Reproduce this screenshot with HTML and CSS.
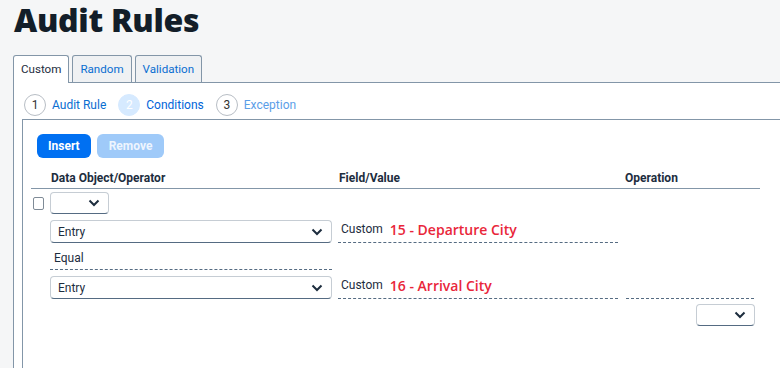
FILE: index.html
```html
<!DOCTYPE html>
<html lang="en">
<head>
    <meta charset="UTF-8">
    <meta name="viewport" content="width=device-width, initial-scale=1.0">
    <title>Audit Rules</title>
    <link rel="stylesheet" href="styles.css">
</head>
<body>
    <h1 class="page-title">Audit Rules</h1>

    <div class="tabs">
        <div class="tab active">Custom</div>
        <div class="tab">Random</div>
        <div class="tab">Validation</div>
    </div>

    <div class="panel">
        <div class="steps">
            <div class="step"><span class="step-num">1</span><span class="step-label">Audit Rule</span></div>
            <div class="step current"><span class="step-num">2</span><span class="step-label">Conditions</span></div>
            <div class="step next"><span class="step-num">3</span><span class="step-label">Exception</span></div>
        </div>

        <div class="conditions">
            <div class="toolbar">
                <button class="btn">Insert</button>
                <button class="btn disabled">Remove</button>
            </div>

            <div class="grid">
                <div class="head"></div>
                <div class="head">Data Object/Operator</div>
                <div class="head">Field/Value</div>
                <div class="head">Operation</div>

                <div class="cell"><span class="checkbox"></span></div>
                <div class="cell">
                    <div class="select small">
                        <span></span>
                        <svg width="12" height="8" viewBox="0 0 12 8"><path d="M1.5 1.5 L6 6 L10.5 1.5" fill="none" stroke="#1d2d3e" stroke-width="2"/></svg>
                    </div>
                </div>
                <div class="cell"></div>
                <div class="cell"></div>

                <div class="cell"></div>
                <div class="cell">
                    <div class="select">
                        <span>Entry</span>
                        <svg width="12" height="8" viewBox="0 0 12 8"><path d="M1.5 1.5 L6 6 L10.5 1.5" fill="none" stroke="#1d2d3e" stroke-width="2"/></svg>
                    </div>
                </div>
                <div class="cell"><div class="value"><span class="kind">Custom</span><span class="field">15 - Departure City</span></div></div>
                <div class="cell"></div>

                <div class="cell"></div>
                <div class="cell"><div class="operator">Equal</div></div>
                <div class="cell"></div>
                <div class="cell"></div>

                <div class="cell"></div>
                <div class="cell">
                    <div class="select">
                        <span>Entry</span>
                        <svg width="12" height="8" viewBox="0 0 12 8"><path d="M1.5 1.5 L6 6 L10.5 1.5" fill="none" stroke="#1d2d3e" stroke-width="2"/></svg>
                    </div>
                </div>
                <div class="cell"><div class="value"><span class="kind">Custom</span><span class="field">16 - Arrival City</span></div></div>
                <div class="cell"><div class="value op-empty"></div></div>

                <div class="cell"></div>
                <div class="cell"></div>
                <div class="cell"></div>
                <div class="cell right">
                    <div class="select small">
                        <span></span>
                        <svg width="12" height="8" viewBox="0 0 12 8"><path d="M1.5 1.5 L6 6 L10.5 1.5" fill="none" stroke="#1d2d3e" stroke-width="2"/></svg>
                    </div>
                </div>
            </div>
        </div>
    </div>
</body>
</html>
```

FILE: styles.css
```css
body {
    margin: 0;
    background-color: #f5f6f7;
    font-family: Roboto, "Liberation Sans", sans-serif;
    color: #1d2d3e;
    overflow: hidden;
}
.page-title {
    margin: 0;
    padding: 0 0 0 14px;
    height: 55px;
    box-sizing: border-box;
    font-family: "Open Sans", sans-serif;
    font-weight: 800;
    font-size: 32px;
    letter-spacing: -0.3px;
    line-height: 40px;
    color: #131e29;
}
.tabs {
    display: flex;
    gap: 3px;
    padding-left: 13px;
}
.tab {
    height: 26px;
    padding: 0 7px;
    border: 1px solid #8396a8;
    border-bottom: none;
    border-radius: 3px 3px 0 0;
    background-color: #eff1f3;
    color: #0a6ed1;
    font-size: 11.6px;
    line-height: 27px;
}
.tab.active {
    background-color: #fff;
    color: #1d2d3e;
    position: relative;
    z-index: 1;
    height: 27px;
    margin-bottom: -1px;
}
.panel {
    margin-left: 13px;
    border-top: 1px solid #8396a8;
    border-left: 1px solid #8396a8;
    background-color: #fff;
    height: 300px;
}
.steps {
    display: flex;
    gap: 12px;
    padding: 11px 0 0 10px;
    height: 25px;
}
.step {
    display: flex;
    align-items: center;
    gap: 6px;
    height: 22px;
}
.step-num {
    width: 20px;
    height: 20px;
    border: 1px solid #b8bec5;
    border-radius: 50%;
    font-size: 12px;
    line-height: 20px;
    text-align: center;
    color: #333;
}
.step-label {
    font-size: 12px;
    color: #0a6ed1;
}
.step.current .step-num {
    background-color: #d6eaff;
    border-color: #d6eaff;
    color: #fff;
}
.step.current .step-label {
    color: #0064d9;
}
.step.next .step-label {
    color: #5b9ee8;
}
.conditions {
    margin-left: 8px;
    border-top: 1px solid #8396a8;
    border-left: 1px solid #8396a8;
    height: 260px;
    padding: 14px 0 0 14px;
}
.toolbar {
    display: flex;
    gap: 6px;
    margin-bottom: 13px;
}
.btn {
    height: 24px;
    padding: 0 11px;
    border: none;
    border-radius: 6px;
    background-color: #0070f2;
    color: #fff;
    font-family: Roboto, sans-serif;
    font-weight: 700;
    font-size: 12px;
}
.btn.disabled {
    background-color: #9fcaf9;
    color: #eef5fe;
    padding: 0 12px;
}
.grid {
    display: grid;
    grid-template-columns: 13px 282px 280px 130px;
    grid-template-rows: 18px 27px 28px 28px 28px 28px;
    column-gap: 6px;
    margin-left: -6px;
    width: 723px;
}
.head {
    font-size: 12px;
    font-weight: 700;
    line-height: 14px;
    padding-left: 1px;
    border-bottom: 1px solid #8396a8;
    margin-right: -6px;
}
.head:last-child {
    margin-right: -4px;
}
.cell {
    display: flex;
    align-items: flex-start;
    padding-top: 4px;
    font-size: 12px;
}
.cell.right {
    justify-content: flex-end;
    margin-right: -1px;
}
.checkbox {
    width: 11px;
    height: 11px;
    border: 1px solid #7f8b97;
    border-radius: 2px;
    margin: 5px 0 0 2px;
}
.grid > .cell:nth-child(-n+8) {
    padding-top: 3px;
}
.select {
    box-sizing: border-box;
    width: 100%;
    height: 23px;
    display: flex;
    align-items: center;
    justify-content: space-between;
    padding: 0 8px 0 7px;
    border: 1px solid #c6cdd4;
    border-bottom-color: #556b82;
    border-radius: 4px;
    font-size: 12px;
}
.select.small {
    width: 59px;
    height: 22px;
}
.value {
    box-sizing: border-box;
    width: 100%;
    height: 23px;
    display: flex;
    align-items: flex-end;
    padding: 0 0 4px 3px;
    border-bottom: 1px dashed #556b82;
}
.op-empty {
    margin-left: 2px;
}
.kind {
    font-size: 12px;
    margin-right: 7px;
    padding-bottom: 2px;
}
.field {
    color: #e9263a;
    font-family: "Open Sans", sans-serif;
    font-weight: 600;
    font-size: 14px;
    line-height: 16px;
}
.operator {
    box-sizing: border-box;
    width: 100%;
    height: 22px;
    padding: 3px 0 0 4px;
    border-bottom: 1px dashed #556b82;
}
```
